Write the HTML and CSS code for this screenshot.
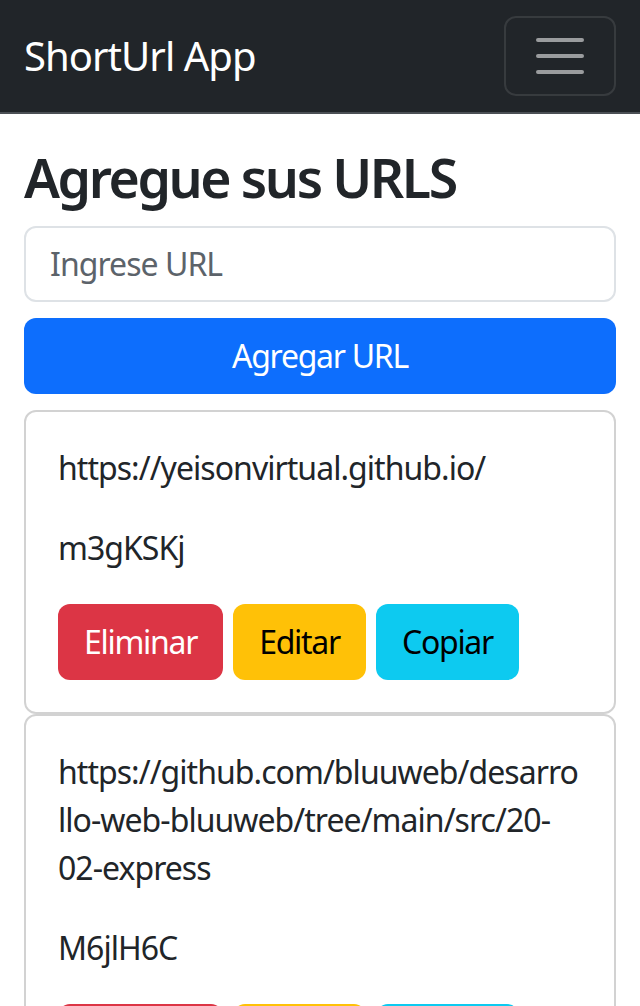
FILE: index.html
```html
<!DOCTYPE html>
<html lang="es">
<head>
<meta charset="utf-8">
<title>ShortUrl App</title>
<link rel="stylesheet" href="styles.css">
</head>
<body>
<nav class="navbar">
  <div class="nav-inner">
    <a class="brand" href="#">ShortUrl App</a>
    <button class="toggler" type="button" aria-label="Toggle navigation">
      <svg class="toggler-icon" viewBox="0 0 30 30" aria-hidden="true">
        <path d="M4 7h22M4 15h22M4 23h22" stroke="rgba(255,255,255,0.55)" stroke-width="2" stroke-linecap="round" stroke-miterlimit="10" fill="none"/>
      </svg>
    </button>
  </div>
</nav>
<main class="container">
  <h1 class="title">Agregue sus URLS</h1>
  <form class="add-form">
    <input class="input" type="text" placeholder="Ingrese URL">
    <button class="btn btn-primary btn-block" type="button">Agregar URL</button>
  </form>
  <div class="card">
    <div class="card-body">
      <p class="text">https://yeisonvirtual.github.io/</p>
      <p class="text">m3gKSKj</p>
      <div class="actions">
        <button class="btn btn-danger" type="button">Eliminar</button>
        <button class="btn btn-warning" type="button">Editar</button>
        <button class="btn btn-info" type="button">Copiar</button>
      </div>
    </div>
  </div>
  <div class="card">
    <div class="card-body">
      <p class="text">https://github.com/bluuweb/desarrollo-web-bluuweb/tree/main/src/20-02-express</p>
      <p class="text">M6jlH6C</p>
      <div class="actions">
        <button class="btn btn-danger" type="button">Eliminar</button>
        <button class="btn btn-warning" type="button">Editar</button>
        <button class="btn btn-info" type="button">Copiar</button>
      </div>
    </div>
  </div>
</main>
</body>
</html>
```
FILE: styles.css
```css
html { font-size: 32px; }
* { box-sizing: border-box; }
body {
  margin: 0;
  font-family: "Noto Sans", "Open Sans", sans-serif;
  font-size: 1rem;
  line-height: 1.5;
  letter-spacing: -0.03em;
  color: #212529;
  background: #fff;
}
.navbar {
  background: #212529;
  border-bottom: 2px solid #4b5055;
  padding: 16px 24px;
}
.nav-inner {
  display: flex;
  align-items: center;
  justify-content: space-between;
}
.brand {
  color: #fff;
  text-decoration: none;
  font-size: 40px;
  line-height: 1.5;
  padding: 10px 0;
}
.toggler {
  display: flex;
  align-items: center;
  padding: 8px 24px;
  background: transparent;
  border: 2px solid rgba(255,255,255,0.1);
  border-radius: 12px;
  line-height: 1;
}
.toggler-icon { width: 60px; height: 60px; display: block; }
.container {
  padding: 0 24px;
  margin-top: 32px;
}
.title {
  font-size: 53.6px;
  font-weight: 600;
  letter-spacing: -0.045em;
  line-height: 1.2;
  margin: 0 0 16px;
}
.add-form { display: flex; flex-direction: column; gap: 16px; margin-bottom: 16px; }
.input {
  font: inherit;
  letter-spacing: inherit;
  width: 100%;
  padding: 12px 24px;
  border: 2px solid #dee2e6;
  border-radius: 12px;
  color: #212529;
  line-height: 1.5;
}
.input::placeholder { color: #5c636a; }
.btn {
  font: inherit;
  letter-spacing: -0.04em;
  line-height: 1.5;
  padding: 12px 24px;
  border: 2px solid transparent;
  border-radius: 12px;
  cursor: pointer;
}
.btn-block { width: 100%; }
.btn-primary { background: #0d6efd; color: #fff; }
.btn-danger { background: #dc3545; color: #fff; }
.btn-warning { background: #ffc107; color: #000; }
.btn-info { background: #0dcaf0; color: #000; }
.card {
  border: 2px solid rgba(0,0,0,0.175);
  border-radius: 12px;
}
.card-body { padding: 32px; }
.text { margin: 0 0 32px; overflow-wrap: break-word; }
.actions { display: flex; gap: 10px; }
```
